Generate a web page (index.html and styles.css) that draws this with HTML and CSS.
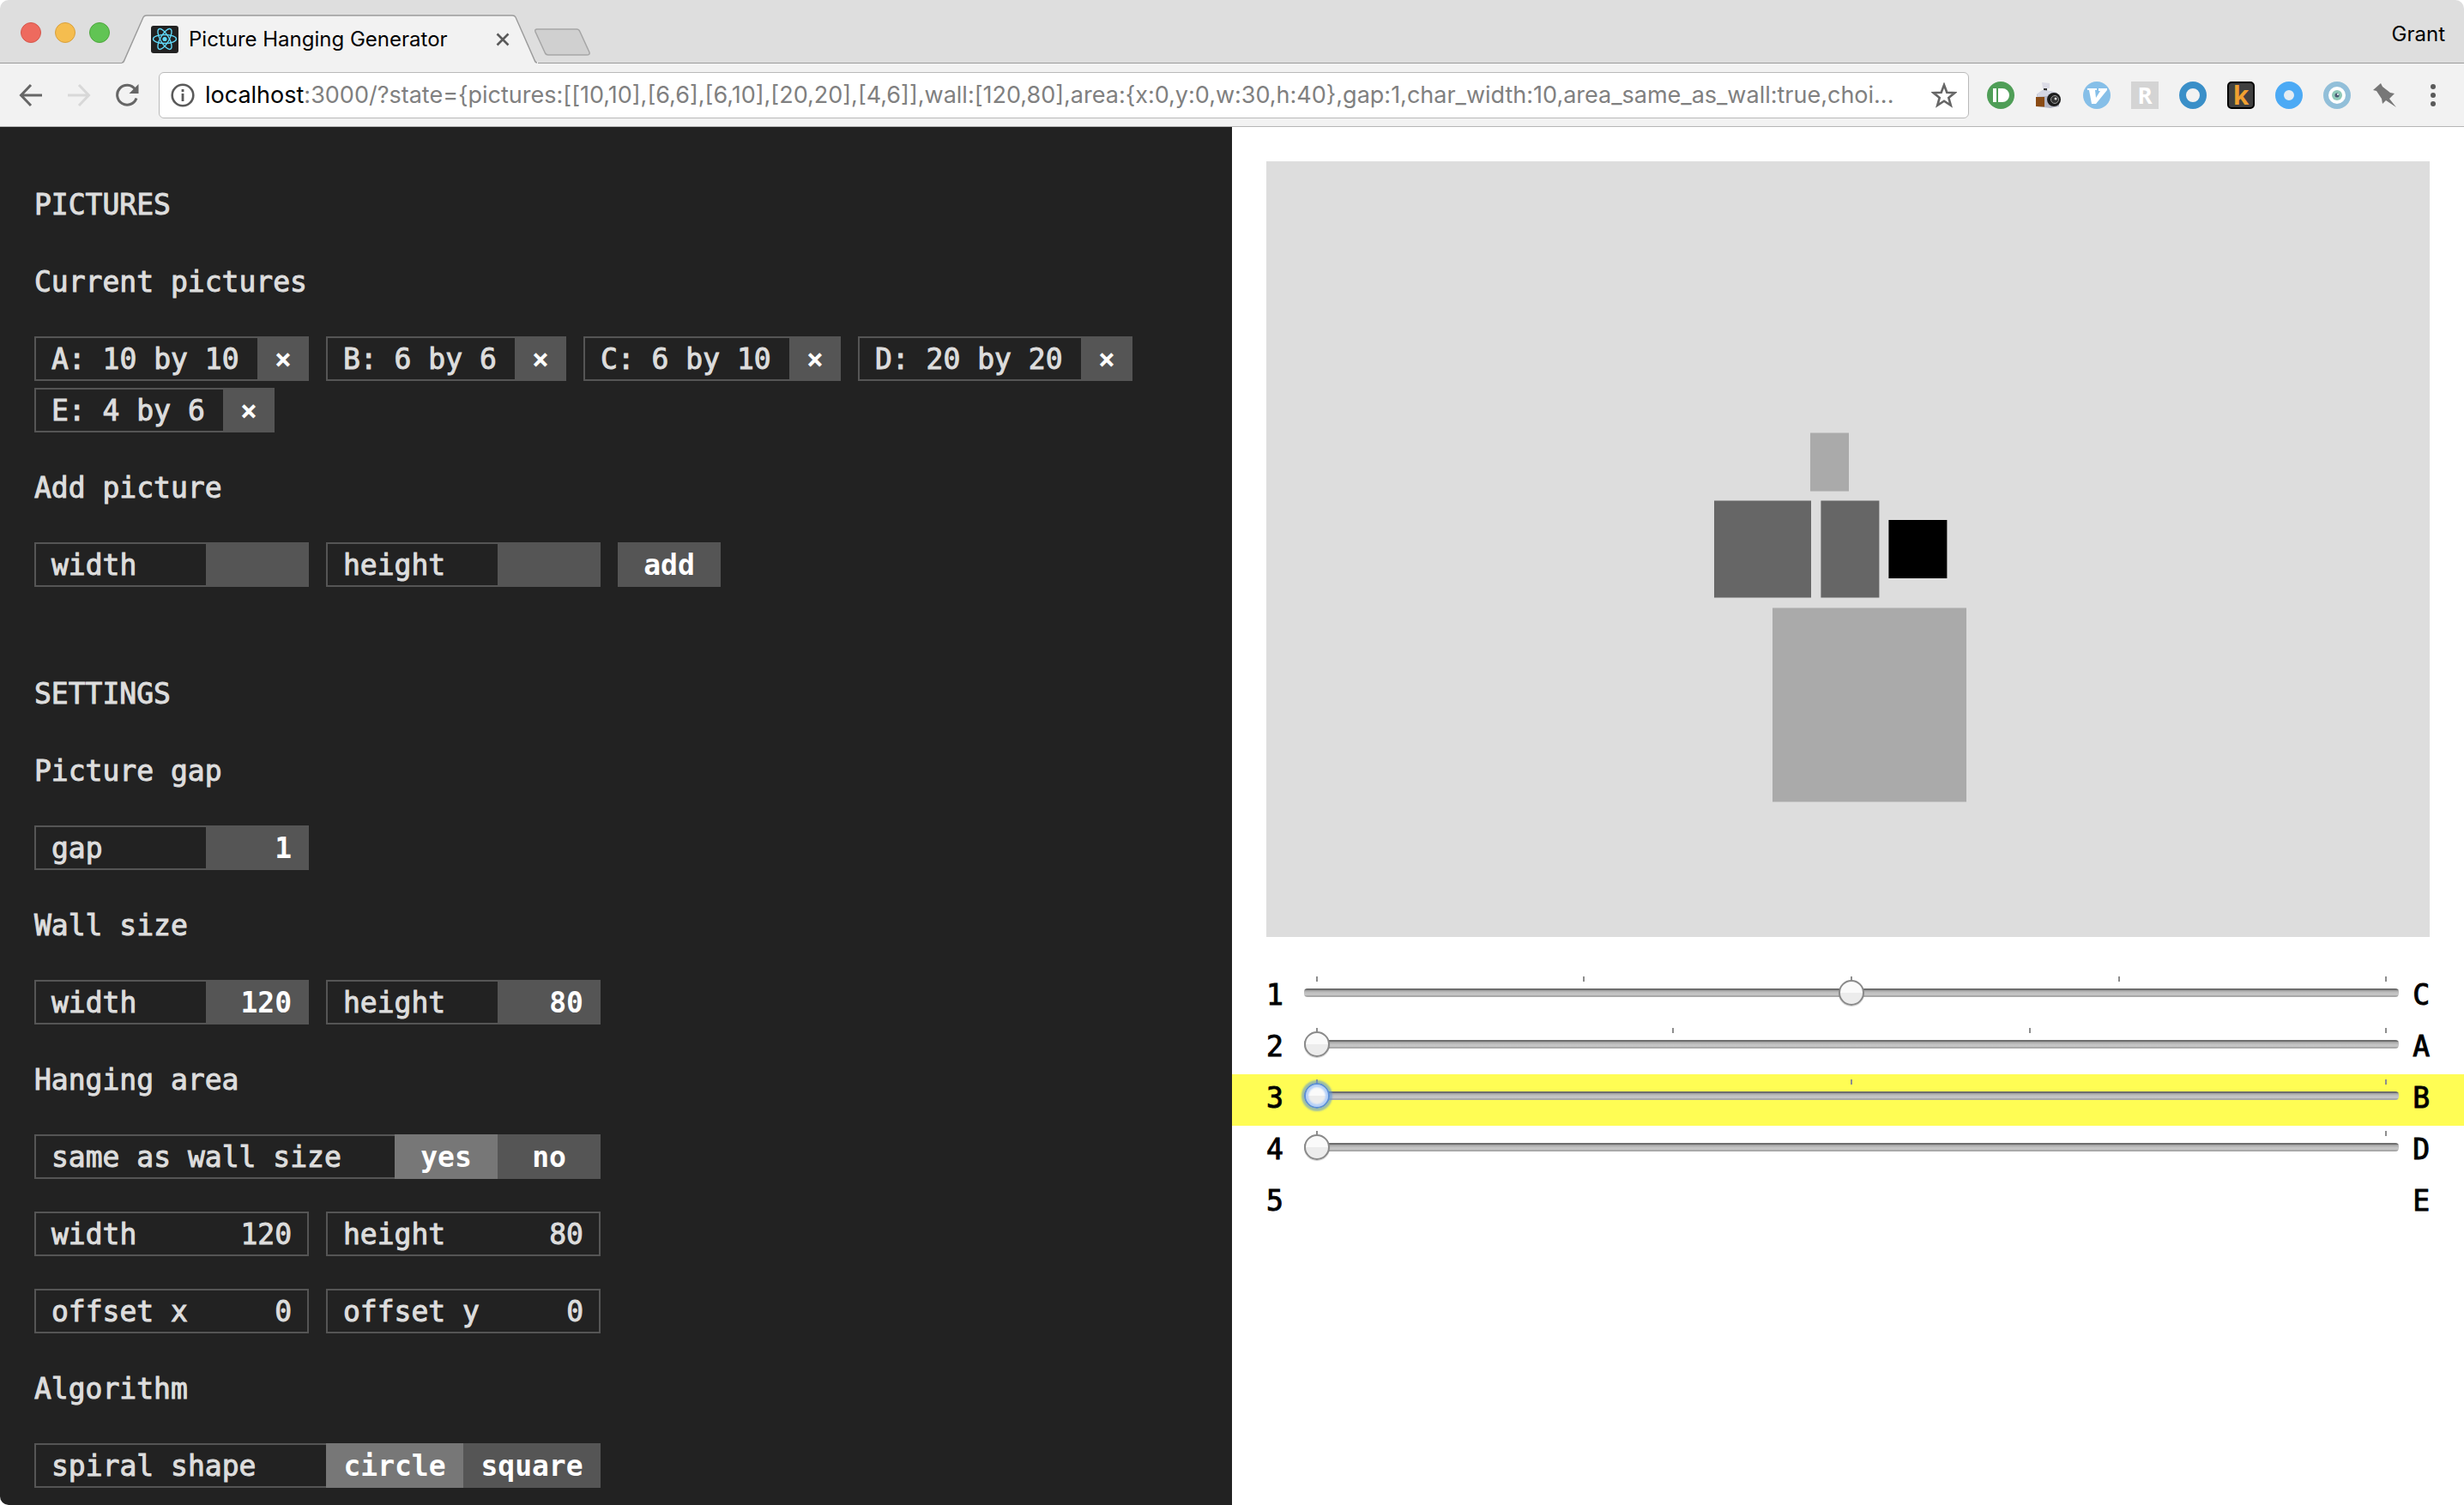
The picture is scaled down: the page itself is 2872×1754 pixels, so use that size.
FILE: index.html
```html
<!DOCTYPE html>
<html lang="en">
<head>
<meta charset="utf-8">
<title>Picture Hanging Generator</title>
<link rel="stylesheet" href="styles.css">
</head>
<body>
<div class="window">
  <header class="chrome">
    <div class="tabstrip">
      <div class="lights"><button class="light light-red" aria-label="Close window"></button><button class="light light-yellow" aria-label="Minimize"></button><button class="light light-green" aria-label="Zoom"></button></div>
      <div class="tab">
        <svg class="tab-shape" viewBox="0 0 488 60" aria-hidden="true"><path d="M0 58C2 58 3 57 4 54L24 6Q25 4 28 4H456Q459 4 460 6L480 54Q481 58 485 58V60H0Z" fill="#f2f2f2"/><path d="M0 59Q2 59 3 56L25 6Q26 4 29 4H455Q458 4 459 6L481 56Q482 59 484 59" fill="none" stroke="#9b9b9b" stroke-width="1.500"/></svg>
        <svg class="favicon" viewBox="0 0 32 32" aria-hidden="true"><rect width="32" height="32" rx="3" fill="#222"/><g fill="none" stroke="#61dafb" stroke-width="1.4"><ellipse cx="16" cy="15.500" rx="13.5" ry="5"/><ellipse cx="16" cy="15.500" rx="13.5" ry="5" transform="rotate(60 16 15.5)"/><ellipse cx="16" cy="15.500" rx="13.5" ry="5" transform="rotate(120 16 15.5)"/></g><circle cx="16" cy="15.500" r="2.600" fill="#61dafb"/></svg>
        <span class="tab-title">Picture Hanging Generator</span>
        <button class="tab-close" aria-label="Close tab"><svg viewBox="0 0 16 16"><path d="M1.500 1.500L14.500 14.500M14.500 1.500L1.500 14.500" stroke="#5a5a5a" stroke-width="2.600"/></svg></button>
      </div>
      <button class="newtab" aria-label="New tab"><svg viewBox="0 0 68 34"><path d="M4 1H50Q53 1 54 4L65 28Q66 31 62 31H17Q14 31 13 28L2 4Q1 1 4 1Z" fill="#d0d0d0" stroke="#a6a6a6" stroke-width="1.500"/></svg></button>
      <span class="user">Grant</span>
    </div>
    <div class="toolbar">
      <button class="nav" aria-label="Back"><svg viewBox="0 0 28 28"><path d="M27 14H3M14 2L2.500 14L14 26" fill="none" stroke="#666" stroke-width="3"/></svg></button>
      <button class="nav" aria-label="Forward"><svg viewBox="0 0 28 28"><path d="M1 14H25M14 2L25.500 14L14 26" fill="none" stroke="#d8d8d8" stroke-width="3"/></svg></button>
      <button class="nav" aria-label="Reload"><svg viewBox="0 0 28 28"><path d="M23.500 7A11.500 11.500 0 1 0 25 17.500" fill="none" stroke="#666" stroke-width="3"/><path d="M27.500 1V12H16.500Z" fill="#666"/></svg></button>
      <div class="address">
        <svg class="info" viewBox="0 0 28 28" aria-hidden="true"><circle cx="14" cy="14" r="12.300" fill="none" stroke="#5a5a5a" stroke-width="2.600"/><path d="M14 12V21M14 7V10" stroke="#5a5a5a" stroke-width="2.800"/></svg>
        <a class="url" href="#"><b>localhost</b>:3000/?state={pictures:[[10,10],[6,6],[6,10],[20,20],[4,6]],wall:[120,80],area:{x:0,y:0,w:30,h:40},gap:1,char_width:10,area_same_as_wall:true,choi...</a>
        <button class="star" aria-label="Bookmark"><svg viewBox="0 0 30 30"><path d="M15 3L18.300 11.700L27.500 12.100L20.300 17.900L22.800 26.800L15 21.700L7.200 26.800L9.700 17.900L2.500 12.100L11.700 11.700Z" fill="none" stroke="#666" stroke-width="2.600"/></svg></button>
      </div>
      <div class="extensions">
        <button aria-label="Pushbullet"><svg viewBox="0 0 32 32"><circle cx="16" cy="16" r="16" fill="#4f9e57"/><path d="M7 8H11V24H7ZM13 8H18A8 8 0 0 1 18 24H13Z" fill="#fff"/></svg></button>
        <button aria-label="Camera"><svg viewBox="0 0 32 32"><path d="M10 8H14V12H10Z" fill="#333"/><path d="M2 15L9 10L17 11L25 13L28 16V29L18 31L2 29Z" fill="#b4b6c4"/><path d="M3 14L9 10L24 12L22 16L2 18Z" fill="#d4d6e2"/><path d="M8 1L17 2V8L9 8Z" fill="#dcdce6"/><path d="M1 18H11V29.500L1 29Z" fill="#8a4b14"/><circle cx="22" cy="21" r="8" fill="#1c1c1c"/><circle cx="23" cy="21" r="4.500" fill="#333" stroke="#999"/><circle cx="24" cy="20" r="1.500" fill="#ddd"/></svg></button>
        <button aria-label="Vimium"><svg viewBox="0 0 32 32"><circle cx="16" cy="16" r="16" fill="#86bfe8"/><path d="M5 8H16V10H14L15 19L20 11H18V8H28V10L15 26H10L7 10H5Z" fill="#fff"/></svg></button>
        <button class="ext-r">R</button>
        <button aria-label="Ring"><svg viewBox="0 0 32 32"><circle cx="16" cy="16" r="12" fill="#f2f2f2" stroke="#3a8fc8" stroke-width="8"/></svg></button>
        <button class="ext-k">k</button>
        <button aria-label="Blue ring"><svg viewBox="0 0 32 32"><circle cx="16" cy="16" r="11" fill="#e4ecf2" stroke="#4caaf5" stroke-width="10"/></svg></button>
        <button aria-label="Eye"><svg viewBox="0 0 32 32"><circle cx="16" cy="16" r="13" fill="#fff" stroke="#92bfd9" stroke-width="6"/><circle cx="16" cy="16" r="6" fill="#8fc9b8"/><circle cx="16" cy="16" r="2.500" fill="#4a5a72"/><circle cx="17" cy="15" r="1" fill="#fff"/></svg></button>
        <button aria-label="Pin"><svg viewBox="0 0 32 32"><path d="M11 2L13 6L22 13L27 14L21 20L29 30L17 22L13 26L12 20L6 11L2 10Z" fill="#777"/></svg></button>
        <button aria-label="Menu"><svg viewBox="0 0 32 32"><g fill="#5a5a5a"><circle cx="16" cy="6" r="3"/><circle cx="16" cy="16" r="3"/><circle cx="16" cy="26" r="3"/></g></svg></button>
      </div>
    </div>
  </header>
  <main class="page">
    <section class="controls">
      <h1>PICTURES</h1>
      <h2>Current pictures</h2>
      <ul class="row">
        <li class="field chip" style="--chars: 11"><span class="label">A: 10 by 10</span><button class="btn btn-x" aria-label="Remove A">×</button></li>
        <li class="field chip" style="--chars: 9"><span class="label">B: 6 by 6</span><button class="btn btn-x" aria-label="Remove B">×</button></li>
        <li class="field chip" style="--chars: 10"><span class="label">C: 6 by 10</span><button class="btn btn-x" aria-label="Remove C">×</button></li>
        <li class="field chip" style="--chars: 11"><span class="label">D: 20 by 20</span><button class="btn btn-x" aria-label="Remove D">×</button></li>
        <li class="field chip" style="--chars: 9"><span class="label">E: 4 by 6</span><button class="btn btn-x" aria-label="Remove E">×</button></li>
      </ul>
      <h2>Add picture</h2>
      <form class="row">
        <div class="field half"><label class="label" for="add-w">width</label><input class="value" id="add-w" type="text"></div>
        <div class="field half"><label class="label" for="add-h">height</label><input class="value" id="add-h" type="text"></div>
        <button class="btn btn-add" type="button">add</button>
      </form>
      <h1 class="next">SETTINGS</h1>
      <h2>Picture gap</h2>
      <div class="row">
        <div class="field half"><label class="label" for="gap">gap</label><input class="value" id="gap" type="text" value="1"></div>
      </div>
      <h2>Wall size</h2>
      <div class="row">
        <div class="field half"><label class="label" for="wall-w">width</label><input class="value" id="wall-w" type="text" value="120"></div>
        <div class="field half"><label class="label" for="wall-h">height</label><input class="value" id="wall-h" type="text" value="80"></div>
      </div>
      <h2>Hanging area</h2>
      <div class="row">
        <div class="field full"><span class="label">same as wall size</span><button class="btn btn-short on">yes</button><button class="btn btn-short">no</button></div>
      </div>
      <div class="row">
        <div class="field half fixed"><span class="label">width</span><output>120</output></div>
        <div class="field half fixed"><span class="label">height</span><output>80</output></div>
      </div>
      <div class="row">
        <div class="field half fixed"><span class="label">offset x</span><output>0</output></div>
        <div class="field half fixed"><span class="label">offset y</span><output>0</output></div>
      </div>
      <h2>Algorithm</h2>
      <div class="row">
        <div class="field full"><span class="label">spiral shape</span><button class="btn btn-long on">circle</button><button class="btn btn-long">square</button></div>
      </div>
    </section>
    <section class="preview">
      <svg class="wall" viewBox="0 0 1356 904" role="img" aria-label="Wall">
        <rect width="1356" height="904" fill="#ddd"/>
        <rect x="634" y="316.500" width="45" height="68" fill="#aaa"/>
        <rect x="522" y="395.500" width="113" height="113" fill="#666"/>
        <rect x="646.400" y="395.500" width="68" height="113" fill="#666"/>
        <rect x="725.400" y="418" width="68" height="68" fill="#000"/>
        <rect x="590" y="520.500" width="226" height="226" fill="#aaa"/>
      </svg>
      <div class="sliders">
        <div class="slide"><label for="s1">1</label><div class="range"><div class="ticks"><i></i><i></i><i></i><i></i><i></i></div><input id="s1" type="range" min="0" max="4" value="2"></div><span>C</span></div>
        <div class="slide"><label for="s2">2</label><div class="range"><div class="ticks"><i></i><i></i><i></i><i></i></div><input id="s2" type="range" min="0" max="3" value="0"></div><span>A</span></div>
        <div class="slide active"><label for="s3">3</label><div class="range"><div class="ticks"><i></i><i></i><i></i></div><input id="s3" type="range" min="0" max="2" value="0"></div><span>B</span></div>
        <div class="slide"><label for="s4">4</label><div class="range"><div class="ticks"><i></i><i></i></div><input id="s4" type="range" min="0" max="1" value="0"></div><span>D</span></div>
        <div class="slide"><b>5</b><div class="range"></div><span>E</span></div>
      </div>
    </section>
  </main>
</div>
</body>
</html>
```
FILE: styles.css
```css
* { box-sizing: border-box; }
html { background: #fff; }
body { margin: 0; }
button { border: 0; padding: 0; margin: 0; background: none; font: inherit; color: inherit; }
svg { display: block; }

.window { display: flex; flex-direction: column; height: 100vh; border-radius: 10px; overflow: hidden; }

/* browser chrome */
.tabstrip { display: flex; align-items: flex-end; height: 74px; padding-right: 22px; background: #dedede; box-shadow: inset 0 -1px #9b9b9b; font: 24px/32px Inter, sans-serif; color: #000; }
.lights { display: flex; gap: 16px; align-self: flex-start; padding: 26px 0 0 24px; }
.light { width: 24px; height: 24px; border-radius: 50%; border: 1px solid; }
.light-red { background: #ee6a5e; border-color: #d5574c; }
.light-yellow { background: #f5bd4f; border-color: #d8a03c; }
.light-green { background: #61c454; border-color: #4ea73d; }
.tab { position: relative; display: flex; align-items: center; width: 484px; height: 60px; margin-left: 14px; padding: 4px 24px 0 34px; gap: 12px; }
.tab-shape { position: absolute; left: 0; top: 0; width: 488px; height: 60px; }
.favicon, .tab-title, .tab-close { position: relative; }
.favicon { width: 32px; height: 32px; flex: none; }
.tab-title { flex: 1; white-space: nowrap; }
.tab-close svg { width: 16px; height: 16px; }
.tab-close { width: 32px; display: flex; justify-content: center; }
.newtab { margin-bottom: 7px; margin-left: -4px; }
.newtab svg { width: 68px; height: 34px; }
.user { margin-left: auto; align-self: center; padding-top: 6px; }

.toolbar { display: flex; align-items: center; height: 74px; padding: 0 20px 0 22px; background: #f2f2f2; border-bottom: 1px solid #b6b6b6; }
.nav { width: 56px; }
.nav svg { width: 28px; height: 28px; }
.address { flex: 1; min-width: 0; display: flex; align-items: center; gap: 12px; height: 54px; margin-left: -5px; padding: 0 13px; background: #fff; border: 1px solid #b9b9b9; border-radius: 6px; }
.info { width: 28px; height: 28px; flex: none; }
.url { flex: 1; min-width: 0; overflow: hidden; white-space: nowrap; font: 27px/36px Inter, sans-serif; color: #808080; text-decoration: none; }
.url b { font-weight: 400; color: #000; }
.star svg { width: 30px; height: 30px; }
.extensions { display: flex; gap: 24px; margin-left: 21px; }
.extensions button, .extensions svg { width: 32px; height: 32px; }
.extensions .ext-r { background: #d4d4d4; color: #fff; font: bold 26px/32px "Open Sans", sans-serif; }
.extensions .ext-k { background: #404040; border: 2px solid #000; border-radius: 5px; color: #f0a030; font: bold 30px/28px "Open Sans", sans-serif; }

/* page */
.page { flex: 1; min-height: 0; display: grid; grid-template-columns: 1fr 1fr; font: 33px/60px "DejaVu Sans Mono", monospace; -webkit-text-stroke: 1px; }
.controls { display: flex; flex-direction: column; gap: 30px; padding: 60px 40px 0; overflow: hidden; background: #222; color: #ddd; }
h1, h2 { height: 60px; margin: 0; font: inherit; line-height: 62px; }
.next { margin-top: 60px; }
.row { display: flex; flex-wrap: wrap; gap: 0 20px; margin: 0; padding: 0; list-style: none; }
.field { display: flex; height: 52px; margin: 4px 0; border: 2px solid #555; line-height: 50px; }
.chip { width: calc(var(--chars) * 20px + 100px); }
.label { flex: 1; padding: 0 18px; white-space: nowrap; }
.half { width: 320px; }
.full { width: 660px; }
.btn { height: 52px; background: #555; color: #fff; font-weight: bold; line-height: 54px; -webkit-text-stroke: 0; }
.field .btn { margin: -2px 0; }
.field .btn:last-child { margin-right: -2px; }
.field .on { background: #777; }
.btn-x { width: 60px; }
.btn-short { width: 120px; }
.btn-long { width: 160px; }
.row .btn-add { width: 120px; margin: 4px 0; }
.value { width: 118px; height: 48px; border: 0; padding: 2px 18px 0; background: #555; color: #fff; font: inherit; font-weight: bold; text-align: right; -webkit-text-stroke: 0; }
.fixed output { padding-right: 18px; }

.preview { padding: 40px 0; background: #fff; color: #000; }
.wall { width: calc(100% - 80px); height: auto; margin: 0 40px 40px; }
.slide { display: flex; height: 60px; padding: 0 40px; line-height: 56px; }
.slide b, .slide label { font-weight: 400; }
.active { background: #fffd54; }
.range { flex: 1; margin: 0 16px 0 24px; padding-top: 6px; }
.ticks { display: flex; justify-content: space-between; height: 6px; padding: 0 14px; }
.ticks i { width: 2px; background: #8e8e8e; }
input[type=range] { appearance: none; display: block; position: relative; width: 100%; height: 30px; margin: -2px 0 0; background: none; outline: none; }
input[type=range]::-webkit-slider-runnable-track { height: 10px; border-radius: 4px; background: linear-gradient(#6e6e6e 0 2px, #9e9e9e 2px, #c2c2c2 5px, #c6c6c6 8px, #a9a9a9 8px); }
input[type=range]::-webkit-slider-thumb { appearance: none; width: 30px; height: 30px; margin-top: -10px; border: 2px solid #8a8a8a; border-radius: 50%; background: linear-gradient(#fafafa 50%, #ececec 50%); box-shadow: 0 1px 1px #0003; }
.active input[type=range]::-webkit-slider-thumb { border-color: #5b8fd6; box-shadow: 0 0 2px 3px #5f98d8a0, inset 0 0 2px 3px #b4d0f8; }
```
